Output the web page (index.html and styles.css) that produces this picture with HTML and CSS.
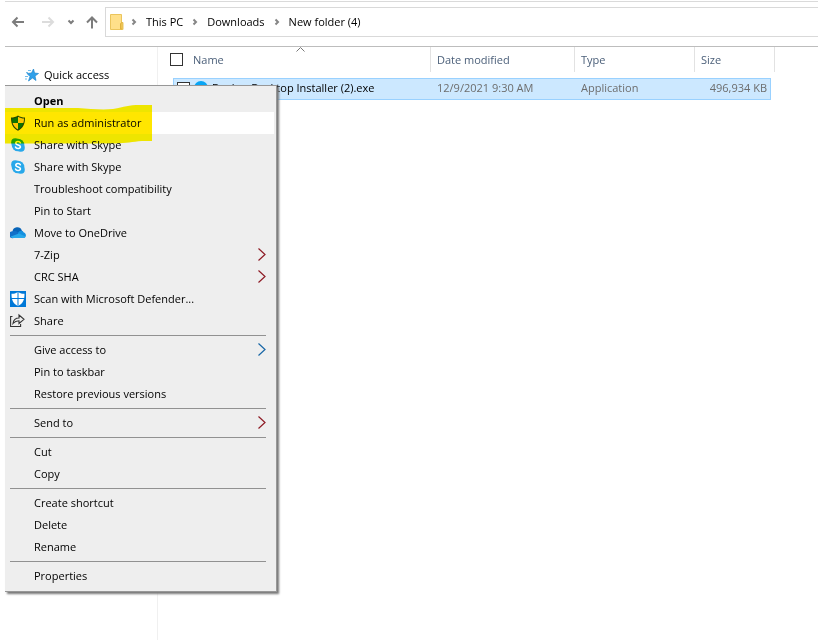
FILE: index.html
```html
<!DOCTYPE html>
<html lang="en">
<head>
<meta charset="utf-8">
<title>New folder (4)</title>
<link rel="stylesheet" href="styles.css">
</head>
<body>
<div class="explorer">
  <header class="toolbar">
    <button class="nav-button" aria-label="Back"><svg width="14" height="14" viewBox="0 0 14 14"><path d="M13 7H2M6.500 2.500L2 7l4.500 4.500"/></svg></button>
    <button class="nav-button forward" aria-label="Forward"><svg width="14" height="14" viewBox="0 0 14 14"><path d="M1 7h11M7.500 2.500L12 7l-4.500 4.500"/></svg></button>
    <button class="nav-button recent" aria-label="Recent locations"><svg width="8" height="8" viewBox="0 0 8 8"><path d="M1.500 2.500L4 5l2.500-2.500"/></svg></button>
    <button class="nav-button up" aria-label="Up"><svg width="14" height="14" viewBox="0 0 14 14"><path d="M7 13.500V2.500M2 7.500l5-5 5 5"/></svg></button>
    <nav class="address" aria-label="Address">
      <svg class="folder" width="14" height="16" viewBox="0 0 14 16"><path d="M.5.5h11v8h1.500v7H.5z" fill="#ffe08a" stroke="#ebc55c"/><path d="M10.500 15V9.500l1.500-1v6.500z" fill="#ffd867" stroke="#dfb13d"/></svg>
      <svg class="crumb-arrow" width="6" height="8" viewBox="0 0 6 8"><path d="M1.500 1.500L4 4 1.500 6.500"/></svg>
      <a href="#">This PC</a>
      <svg class="crumb-arrow" width="6" height="8" viewBox="0 0 6 8"><path d="M1.500 1.500L4 4 1.500 6.500"/></svg>
      <a href="#">Downloads</a>
      <svg class="crumb-arrow" width="6" height="8" viewBox="0 0 6 8"><path d="M1.500 1.500L4 4 1.500 6.500"/></svg>
      <a href="#">New folder (4)</a>
    </nav>
  </header>
  <div class="content">
    <aside class="sidebar">
      <a href="#" class="quick">
        <svg width="14" height="14" viewBox="0 0 14 14"><path d="M8.500 1l1 4 4 .5-3.500 2.500 1 4.500-3.500-2.500L3.500 13l1.500-4.500L2 5.500l4.500-.5z" fill="#2fa0ea" stroke="#1f86cf" stroke-width=".7"/><path d="M3 2.500h3M1 4.500h2M0 8.500h3M0 11h2" stroke="#72bce9"/></svg>
        Quick access
      </a>
    </aside>
    <main class="files">
      <table>
        <colgroup><col class="col-name"><col class="col-date"><col class="col-type"><col class="col-size"><col class="col-end"></colgroup>
        <thead>
          <tr>
            <th class="name-head"><svg class="sort" width="9" height="5" viewBox="0 0 9 5"><path d="M.5 4.500l4-4 4 4"/></svg><div class="cell"><input type="checkbox" aria-label="Select all"><span>Name</span></div></th>
            <th>Date modified</th><th>Type</th><th colspan="2">Size</th>
          </tr>
        </thead>
        <tbody>
          <tr class="spacer"><td colspan="5"></td></tr>
          <tr class="selected">
            <td class="file-name"><div class="cell"><input type="checkbox" aria-label="Select Docker Desktop Installer (2).exe"><svg width="14" height="16" viewBox="0 0 14 16"><circle cx="7" cy="8" r="7" fill="#07a5f5"/><path d="M3 9h8c-1 5-7 5-8 0z" fill="#fff"/></svg><span>Docker Desktop Installer (2).exe</span></div></td>
            <td>12/9/2021 9:30 AM</td><td>Application</td><td class="size">496,934 KB</td><td class="end"></td>
          </tr>
        </tbody>
      </table>
    </main>
  </div>
  <div class="menu" role="menu">
    <button role="menuitem" class="item default"><span class="label">Open</span></button>
    <button role="menuitem" class="item active"><span class="icon"><svg width="16" height="16" viewBox="0 0 16 16"><path d="M8 0.500C6 2 3.500 2.500 1 2.500c0 7 2 10.500 7 13.200 5-2.700 7-6.200 7-13.200C12.500 2.500 10 2 8 .5z" fill="#264b4e"/><path d="M8 1.700V8H2.600C2.200 6.800 2 5.300 2 3.500c2-.1 4-.5 6-1.800z" fill="#0c8060"/><path d="M8 1.700V8h5.400c.4-1.200.6-2.700.6-4.500-2-.1-4-.5-6-1.800z" fill="#ffdc70"/><path d="M8 8v6.500C5.200 12.900 3.600 11 2.600 8z" fill="#ffdc70"/><path d="M8 8v6.500c2.800-1.600 4.400-3.500 5.400-6.500z" fill="#0c8060"/></svg></span><span class="label">Run as administrator</span></button>
    <button role="menuitem" class="item"><span class="icon"><svg width="16" height="16" viewBox="0 0 16 16"><g fill="#28a8ea"><circle cx="8" cy="8" r="6.300"/><circle cx="5.200" cy="5.200" r="4"/><circle cx="10.800" cy="10.800" r="4"/></g><path d="M10.300 5.700C9.600 4 5.800 4 5.800 6.200c0 2.300 4.600 1.300 4.600 3.500 0 2.300-4.200 2.300-4.900.3" fill="none" stroke="#fff" stroke-width="1.600" stroke-linecap="round"/></svg></span><span class="label">Share with Skype</span></button>
    <button role="menuitem" class="item"><span class="icon"><svg width="16" height="16" viewBox="0 0 16 16"><g fill="#28a8ea"><circle cx="8" cy="8" r="6.300"/><circle cx="5.200" cy="5.200" r="4"/><circle cx="10.800" cy="10.800" r="4"/></g><path d="M10.300 5.700C9.600 4 5.800 4 5.800 6.200c0 2.300 4.600 1.300 4.600 3.500 0 2.300-4.200 2.300-4.900.3" fill="none" stroke="#fff" stroke-width="1.600" stroke-linecap="round"/></svg></span><span class="label">Share with Skype</span></button>
    <button role="menuitem" class="item"><span class="label">Troubleshoot compatibility</span></button>
    <button role="menuitem" class="item"><span class="label">Pin to Start</span></button>
    <button role="menuitem" class="item"><span class="icon"><svg width="16" height="16" viewBox="0 0 16 16"><path d="M2.500 6.500a4.800 4.800 0 0 1 9.300-1L13 8l-9 3z" fill="#0764b8"/><path d="M3.500 13A3.500 3.500 0 1 1 3 6.200c2-.4 3.500 0 5 1.200L12 13z" fill="#1170c9"/><path d="M8 8c1-2.500 4.500-3 5.500-.8C16.500 8 16.700 12 14 13H8z" fill="#1490df"/><path d="M.8 11.500L9 8.500l6.500 3c-.5 1-1 1.500-2.500 1.500H3.500c-1.300 0-2.200-.5-2.700-1.500z" fill="#28a8ea"/></svg></span><span class="label">Move to OneDrive</span></button>
    <button role="menuitem" class="item"><span class="label">7-Zip</span><svg class="more" width="8" height="14" viewBox="0 0 8 14"><path d="M.5.500l6.500 6-6.500 6"/></svg></button>
    <button role="menuitem" class="item"><span class="label">CRC SHA</span><svg class="more" width="8" height="14" viewBox="0 0 8 14"><path d="M.5.500l6.500 6-6.500 6"/></svg></button>
    <button role="menuitem" class="item"><span class="icon"><svg width="16" height="16" viewBox="0 0 16 16"><path d="M0 0h16v16H0z" fill="#0078d7"/><path d="M8 1C6 2.300 4 2.800 1.500 2.800c0 6.200 1.500 9.700 6.500 12.400 5-2.700 6.500-6.200 6.500-12.400C12 2.800 10 2.300 8 1z" fill="#fff"/><path d="M8 1v14M1 7.500h14" stroke="#0078d7"/></svg></span><span class="label">Scan with Microsoft Defender...</span></button>
    <button role="menuitem" class="item"><span class="icon"><svg width="16" height="16" viewBox="0 0 16 16" fill="none" stroke="#333" stroke-width="1.100"><path d="M2.500 3.500H.6v10h10V11"/><path d="M3 10.500c.5-3.500 3-5.500 6-5.500V2l5 4.300-5 4.200V7.800c-2.500 0-4.300.7-6 2.700z"/></svg></span><span class="label">Share</span></button>
    <hr>
    <button role="menuitem" class="item"><span class="label">Give access to</span><svg class="more blue" width="8" height="14" viewBox="0 0 8 14"><path d="M.5.500l6.500 6-6.500 6"/></svg></button>
    <button role="menuitem" class="item"><span class="label">Pin to taskbar</span></button>
    <button role="menuitem" class="item"><span class="label">Restore previous versions</span></button>
    <hr>
    <button role="menuitem" class="item"><span class="label">Send to</span><svg class="more" width="8" height="14" viewBox="0 0 8 14"><path d="M.5.500l6.500 6-6.500 6"/></svg></button>
    <hr>
    <button role="menuitem" class="item"><span class="label">Cut</span></button>
    <button role="menuitem" class="item"><span class="label">Copy</span></button>
    <hr>
    <button role="menuitem" class="item"><span class="label">Create shortcut</span></button>
    <button role="menuitem" class="item"><span class="label">Delete</span></button>
    <button role="menuitem" class="item"><span class="label">Rename</span></button>
    <hr>
    <button role="menuitem" class="item"><span class="label">Properties</span></button>
    <svg class="marker" width="147" height="40" viewBox="0 0 147 40"><defs><linearGradient id="ink" gradientUnits="userSpaceOnUse" x1="0" y1="0" x2="0" y2="40"><stop offset=".175" stop-color="#fff600"/><stop offset=".175" stop-color="#ffe600"/><stop offset=".725" stop-color="#ffe600"/><stop offset=".725" stop-color="#fff600"/></linearGradient></defs><path d="M0 3h73c12 1 25 2 35 1 12-2 15-4 27-4h12v36h-10c-10 1-15 2-27 2.500H0z" fill="url(#ink)"/></svg>
  </div>
</div>
</body>
</html>
```
FILE: styles.css
```css
* { box-sizing: border-box; }

body {
  margin: 0;
  background: #fff;
  color: #000;
  font-family: "Open Sans", "Noto Sans", sans-serif;
  font-size: 11px;
  line-height: 16px;
}

a { color: inherit; text-decoration: none; }

button {
  border: 0;
  padding: 0;
  background: none;
  color: inherit;
  font: inherit;
}

svg { display: block; flex: none; }

.explorer {
  position: relative;
  display: flex;
  flex-direction: column;
  min-height: 100vh;
  padding: 1px 0 2px 5px;
}

.toolbar {
  display: flex;
  align-items: center;
  height: 46px;
  padding: 0 0 4px 6px;
  border-top: 1px solid #dadada;
  border-bottom: 1px solid #bdbdbd;
}

.nav-button {
  display: flex;
  margin-right: 16px;
  fill: none;
  stroke: #7c7c7c;
  stroke-width: 2;
}
.nav-button.forward { margin-right: 12px; stroke: #dcdcdc; }
.nav-button.recent { margin-right: 10px; }
.nav-button.up { margin-right: 6px; }

.address {
  display: flex;
  align-items: center;
  flex: 1;
  height: 30px;
  padding-left: 4px;
  border: 1px solid #d9d9d9;
  border-right: 0;
}

.folder { margin-right: 7px; }
.crumb-arrow { fill: none; stroke: #858585; stroke-width: 2; }
.address a { margin: 0 9px; white-space: nowrap; }

.content { display: flex; flex: 1; }

.sidebar {
  flex: none;
  width: 153px;
  padding: 20px 0 0 20px;
  border-right: 1px solid #f0f0f0;
}

.quick { display: flex; align-items: center; gap: 5px; }

.files { flex: 1; min-width: 0; padding-left: 15px; }

table {
  table-layout: fixed;
  width: 602px;
  border-spacing: 0;
}
.col-name { width: 258px; }
.col-date { width: 144px; }
.col-type { width: 120px; }
.col-size { width: 76px; }
.col-end { width: 4px; }

th {
  height: 25px;
  padding: 0 6px;
  border-right: 1px solid #e2e2e2;
  color: #4c607a;
  font-weight: 400;
  text-align: left;
}
.name-head { position: relative; padding: 0; }
.name-head .cell { margin-left: -3px; gap: 10px; }
.sort {
  position: absolute;
  top: 0;
  left: 123px;
  fill: none;
  stroke: #777;
}

.cell { display: flex; align-items: center; }

input[type="checkbox"] {
  appearance: none;
  flex: none;
  width: 13px;
  height: 13px;
  margin: 0;
  border: 1px solid #333;
  background: #fff;
}

td { padding: 0 6px; white-space: nowrap; }
.spacer td { height: 6px; padding: 0; }
.selected td {
  height: 22px;
  padding-bottom: 2px;
  border: solid #99d1ff;
  border-width: 1px 0;
  background: #cce8ff;
  color: #6d6d6d;
}
.selected .file-name {
  padding: 0 0 2px 3px;
  border-left-width: 1px;
  color: #000;
}
.file-name .cell { gap: 4px; }
.selected .size { padding: 0 3px 2px; border-right-width: 1px; text-align: right; }
.selected .end { padding: 0; border: 0; background: none; }

.menu {
  position: absolute;
  top: 85px;
  left: 5px;
  width: 272px;
  padding: 4px 2px 4px 0;
  border: 1px solid #979797;
  border-left: 0;
  background: #eee;
  box-shadow: 2px 2px 2px #777;
}

.item {
  display: flex;
  align-items: center;
  width: 100%;
  height: 22px;
  padding: 0 8px 0 29px;
  text-align: left;
}
.item.default { font-weight: 700; }
.item.active { background: #fff; }
.icon { width: 24px; margin-left: -24px; }
.label { flex: 1; white-space: nowrap; }

.more { fill: none; stroke: #8e1b25; stroke-width: 1.2; }
.more.blue { stroke: #1766a6; }

hr {
  height: 1px;
  margin: 3px 8px 3px 5px;
  border: 0;
  background: #919191;
}

.marker {
  position: absolute;
  top: 19px;
  left: 0;
  mix-blend-mode: multiply;
  pointer-events: none;
}
```
